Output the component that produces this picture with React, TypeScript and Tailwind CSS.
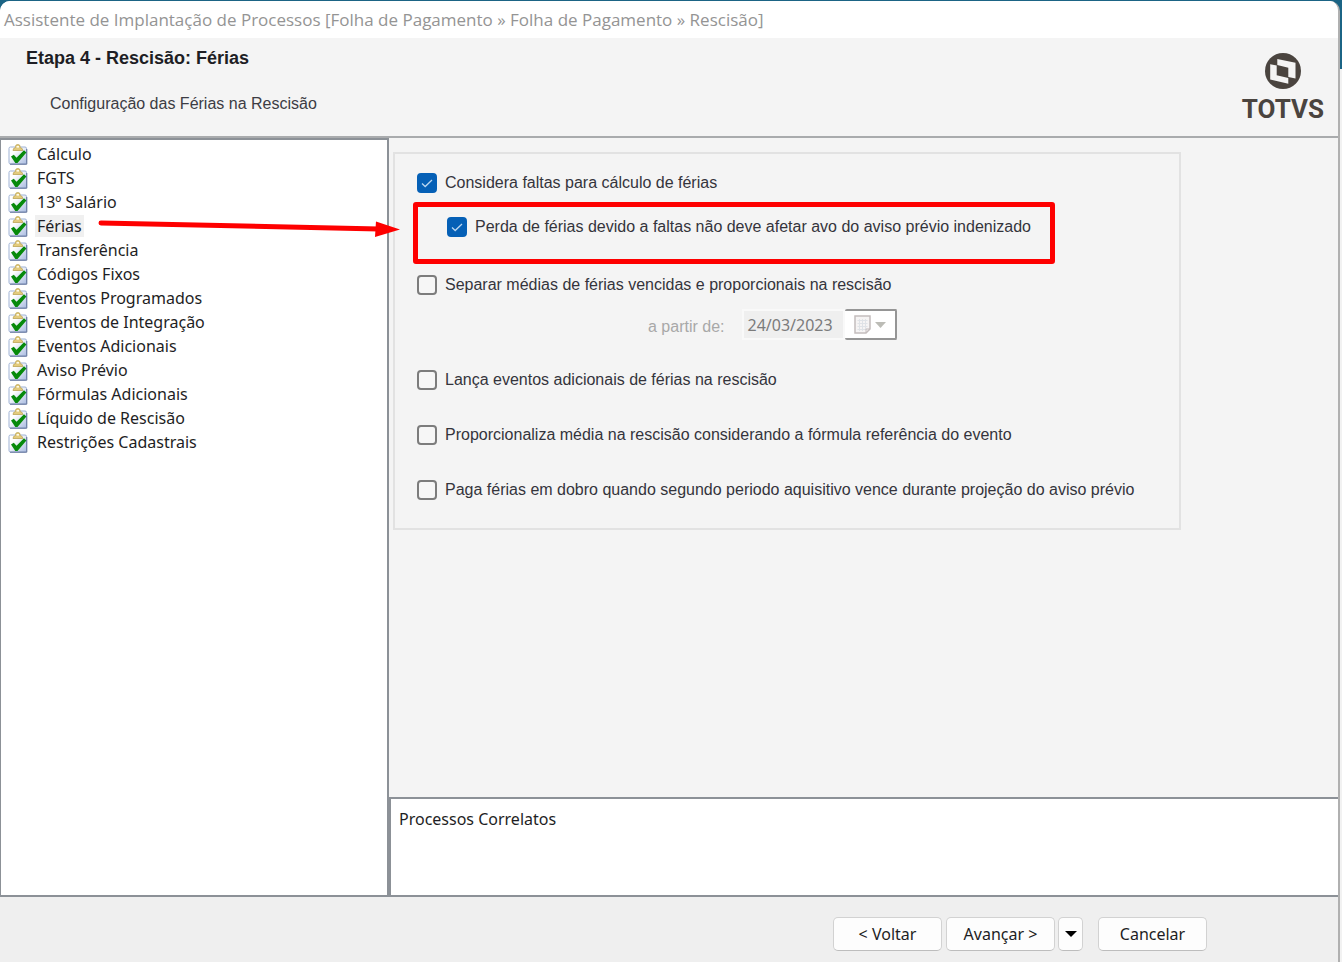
import { useState } from 'react';

const STEPS = [
  'Cálculo',
  'FGTS',
  '13º Salário',
  'Férias',
  'Transferência',
  'Códigos Fixos',
  'Eventos Programados',
  'Eventos de Integração',
  'Eventos Adicionais',
  'Aviso Prévio',
  'Fórmulas Adicionais',
  'Líquido de Rescisão',
  'Restrições Cadastrais',
];

function ClipboardCheck() {
  return (
    <svg viewBox="0 0 20 21" className="h-[21px] w-5 shrink-0" aria-hidden="true">
      <defs>
        <linearGradient id="paper" x1="0" y1="0" x2="1" y2="1">
          <stop offset="0.300" stopColor="#ffffff" />
          <stop offset="1" stopColor="#a9bbe0" />
        </linearGradient>
      </defs>
      <rect x="1" y="3" width="17.500" height="17" rx="1.500" fill="url(#paper)" stroke="#9fb2d4" />
      <path d="M2 20.200h16.800V5" fill="none" stroke="#5d6f98" />
      <path d="M5 6.500q0-2.500 2.500-3V2.500q0-2 2.300-2t2.300 2v1q2.700.5 2.700 3z" fill="#e3cb7c" stroke="#bda556" strokeWidth=".8" />
      <rect x="8.600" y="2" width="2.400" height="1.600" fill="#fffbe8" />
      <path d="M3 12.500l2.800-1.800 2.700 3L16 6.200l2.400 2.300L9.500 19H7.300z" fill="#078a0b" />
    </svg>
  );
}

function TotvsLogo() {
  return (
    <div className="flex flex-col items-center text-[#4a443f]">
      <svg viewBox="0 0 36 36" className="size-9" aria-hidden="true">
        <circle cx="18" cy="18" r="18" fill="currentColor" />
        <path d="M12.300 6L30.500 9.800V25.500L23.300 24V14.800L12.300 12z" fill="#f4f4f4" />
        <path d="M5.200 11.200L11.700 12.600V22.200L23.300 25v5.800L5.200 26.500z" fill="#f4f4f4" />
      </svg>
      <span className="font-['Roboto',sans-serif] text-[26px] leading-10 font-bold">TOTVS</span>
    </div>
  );
}

type OptionProps = { id: string; label: string; defaultChecked?: boolean };

function Option({ id, label, defaultChecked = false }: OptionProps) {
  const [checked, setChecked] = useState(defaultChecked);

  return (
    <div className="flex h-5 items-center gap-2">
      <span className="relative size-5 shrink-0">
        <input
          id={id}
          type="checkbox"
          checked={checked}
          onChange={(e) => setChecked(e.target.checked)}
          className="block size-5 appearance-none rounded-[4px] border-2 border-[#7c7c7c] bg-[#f6f6f6] checked:border-[#0560b6] checked:bg-[#0560b6]"
        />
        {checked && (
          <svg viewBox="0 0 20 20" className="pointer-events-none absolute inset-0 size-5" aria-hidden="true">
            <path d="M5 10.500l3.200 3L15 7" fill="none" stroke="#b9d6f0" strokeWidth="1.300" />
          </svg>
        )}
      </span>
      <label htmlFor={id} className="whitespace-nowrap">
        {label}
      </label>
    </div>
  );
}

export default function App() {
  const [current, setCurrent] = useState('Férias');
  const buttonStyle = 'h-[34px] rounded-[5px] border border-[#d2d2d2] border-b-[#bdbdbd] bg-[#fdfdfd]';

  return (
    <div className="flex min-h-screen flex-col bg-linear-to-b from-[#1b6485] from-[69px] to-[#f2f2f2] to-[69px] pt-px pr-0.5">
      <div className="flex flex-1 flex-col overflow-hidden rounded-t-[10px] border-r-2 border-[#b0b0b0] bg-[#f4f4f4] font-['Noto_Sans',sans-serif] text-base text-[#1e1e24]">
        <div className="flex h-[37px] items-center bg-white px-1">
          <h1 className="font-['Open_Sans',sans-serif] text-[17px] text-[#949494]">
            Assistente de Implantação de Processos [Folha de Pagamento » Folha de Pagamento » Rescisão]
          </h1>
        </div>

        <header className="flex h-[100px] justify-between border-b-2 border-[#a9abad] pr-3.5 pl-[26px] font-['Liberation_Sans',sans-serif]">
          <div className="pt-2">
            <h2 className="text-lg leading-6 font-bold">Etapa 4 - Rescisão: Férias</h2>
            <p className="pt-[22px] pl-6 leading-6 text-[#3c3c44]">Configuração das Férias na Rescisão</p>
          </div>
          <div className="pt-[15px]">
            <TotvsLogo />
          </div>
        </header>

        <div className="relative flex flex-1">
          <nav className="w-[389px] shrink-0 border-t-2 border-r-2 border-l border-[#8c9197] bg-white pt-0.5 pl-[7px]">
            <ul>
              {STEPS.map((step) => (
                <li key={step} className="flex h-6 items-center gap-[7px]">
                  <ClipboardCheck />
                  <button
                    type="button"
                    onClick={() => setCurrent(step)}
                    className={`px-0.5 leading-[22px] ${step === current ? 'bg-[#f0f0f0]' : ''}`}
                  >
                    {step}
                  </button>
                </li>
              ))}
            </ul>
          </nav>

          <div className="flex min-w-0 flex-1 flex-col">
            <main className="flex-1 px-1 pt-3.5 font-['Liberation_Sans',sans-serif] text-[#34343c]">
              <section className="flex max-w-[788px] flex-col border-2 border-[#e2e2e2] px-[18px] pt-[19px] pb-7">
                <div className="pl-1">
                  <Option id="faltas" label="Considera faltas para cálculo de férias" defaultChecked />
                </div>
                <div className="mt-[9px] h-[62px] w-[642px] rounded-[3px] border-5 border-[#fe0000] pt-2.5 pl-[29px]">
                  <Option
                    id="perda"
                    label="Perda de férias devido a faltas não deve afetar avo do aviso prévio indenizado"
                    defaultChecked
                  />
                </div>
                <div className="flex flex-col pt-[11px] pl-1">
                  <Option id="medias" label="Separar médias de férias vencidas e proporcionais na rescisão" />
                  <div className="mt-3.5 mb-[30px] flex h-[31px] items-center gap-[18px] pl-[231px]">
                    <label htmlFor="data" className="pt-1 text-[#a8a8a8]">
                      a partir de:
                    </label>
                    <div className="flex">
                      <input
                        id="data"
                        type="text"
                        defaultValue="24/03/2023"
                        disabled
                        className="h-[31px] w-[103px] border-2 border-[#f9f9f9] bg-[#efefef] px-[3px] font-['Noto_Sans',sans-serif] text-[#7b7b7b]"
                      />
                      <button
                        type="button"
                        disabled
                        aria-label="Abrir calendário"
                        className="flex h-[31px] w-[52px] items-center justify-center gap-1 rounded-[2px] border-2 border-l-0 border-[#959595] bg-white"
                      >
                        <svg viewBox="0 0 17 19" className="h-[19px] w-[17px]" aria-hidden="true">
                          <path d="M1 1h15v13l-4 4H1z" fill="#f6f4f4" stroke="#c4bdbd" strokeWidth="1.500" />
                          <path d="M3.500 5.500h10M3.500 8.500h10M3.500 11.500h10M3.500 14.500h8M5.500 4v12M8.500 4v12M11.500 4v11" stroke="#e0e3e7" />
                          <path d="M12 18v-4h4" fill="none" stroke="#c4bdbd" />
                        </svg>
                        <svg viewBox="0 0 11 6" className="h-1.5 w-[11px]" aria-hidden="true">
                          <path d="M0 0h11L5.500 6z" fill="#bcbcb6" />
                        </svg>
                      </button>
                    </div>
                  </div>
                  <div className="flex flex-col gap-[35px]">
                    <Option id="adicionais" label="Lança eventos adicionais de férias na rescisão" />
                    <Option
                      id="proporcionaliza"
                      label="Proporcionaliza média na rescisão considerando a fórmula referência do evento"
                    />
                    <Option
                      id="dobro"
                      label="Paga férias em dobro quando segundo periodo aquisitivo vence durante projeção do aviso prévio"
                    />
                  </div>
                </div>
              </section>
            </main>

            <section className="h-[98px] border-t-2 border-l-2 border-[#8c9197] bg-white px-2 pt-2">
              <h3>Processos Correlatos</h3>
            </section>
          </div>

          {/* flecha do item Férias até a opção destacada */}
          <svg viewBox="0 0 304 20" className="pointer-events-none absolute top-20 left-[97px] h-5 w-[304px]" aria-hidden="true">
            <path d="M4 5L282 11" stroke="#fe0000" strokeWidth="5" strokeLinecap="round" />
            <path d="M279 3.500L303 11.500L278 19z" fill="#fe0000" />
          </svg>
        </div>

        <footer className="flex h-[67px] items-center justify-end border-t-2 border-[#8c9197] bg-[#efefef] pt-2 pr-[131px]">
          <button type="button" className={`${buttonStyle} w-[109px]`}>
            &lt; Voltar
          </button>
          <button type="button" className={`${buttonStyle} ml-1 w-[109px]`}>
            Avançar &gt;
          </button>
          <button type="button" aria-label="Mais opções" className={`${buttonStyle} ml-[3px] flex w-[25px] items-center justify-center`}>
            <svg viewBox="0 0 12 6" className="h-1.5 w-3" aria-hidden="true">
              <path d="M0 0h12L6 6z" fill="#000" />
            </svg>
          </button>
          <button type="button" className={`${buttonStyle} ml-[15px] w-[109px]`}>
            Cancelar
          </button>
        </footer>
      </div>
    </div>
  );
}
